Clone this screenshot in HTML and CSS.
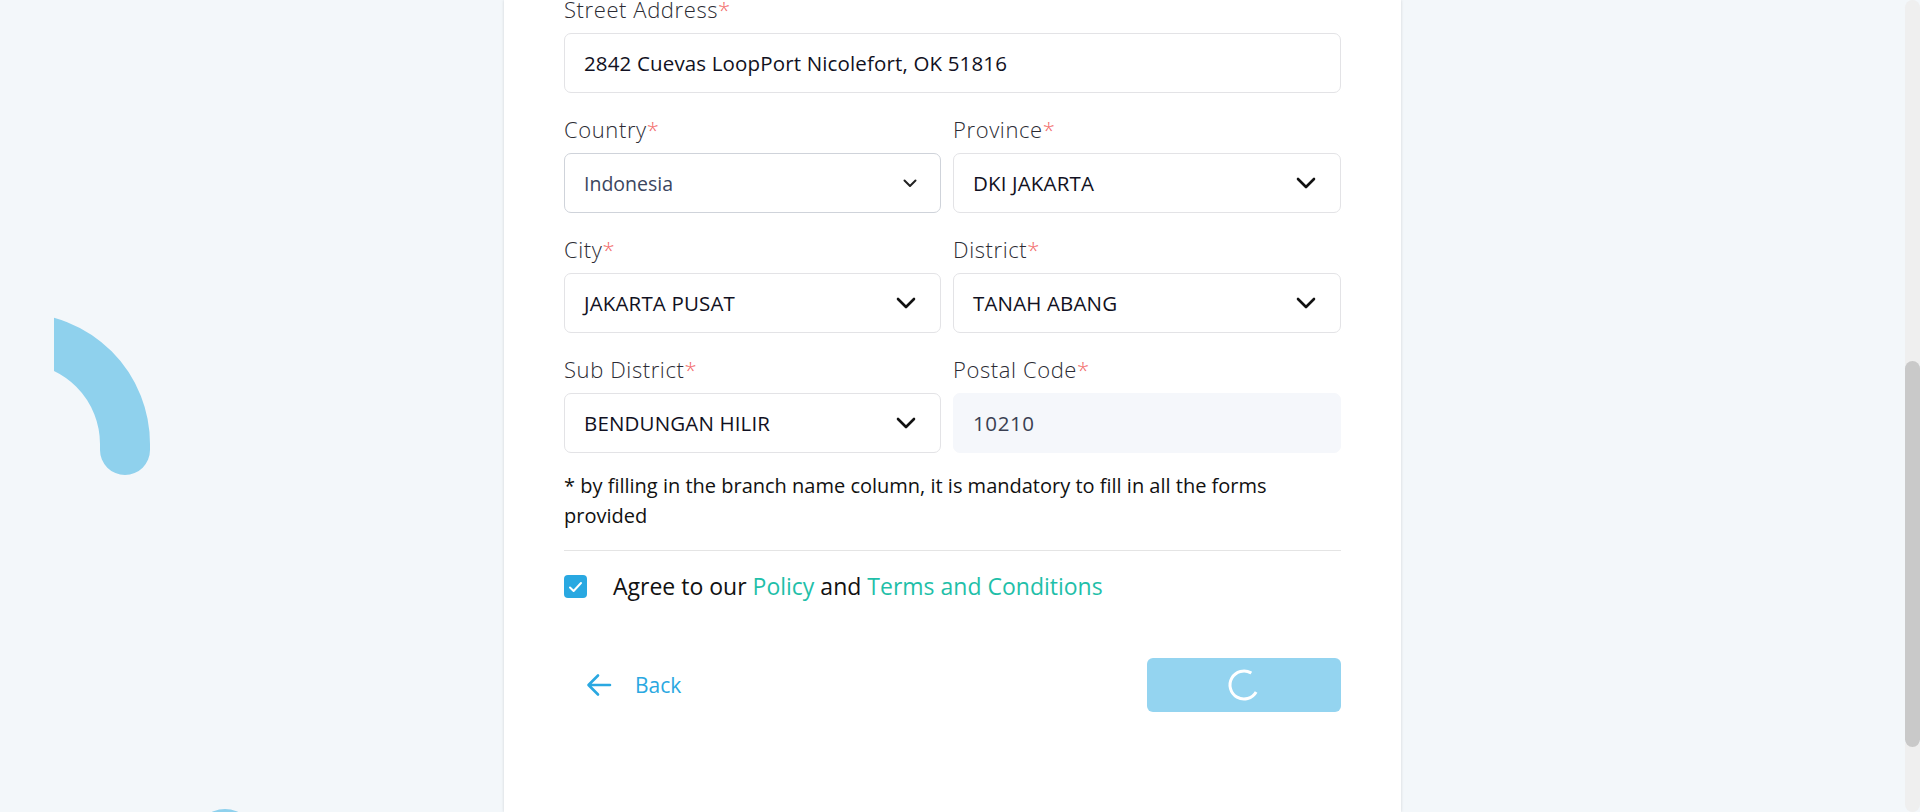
FILE: index.html
```html
<!DOCTYPE html>
<html lang="en">
<head>
<meta charset="utf-8">
<title>Branch Address</title>
<link rel="stylesheet" href="styles.css">
</head>
<body>
<div class="page">
  <main class="main">
    <svg class="deco-arc" width="120" height="190" viewBox="0 0 120 190" aria-hidden="true">
      <path d="M -35 38 A 106 106 0 0 1 71 144 L 71 150" fill="none" stroke="#8fd1ed" stroke-width="50" stroke-linecap="round"/>
    </svg>
    <div class="deco-dot"></div>

    <section class="card">
      <form class="form">
        <div class="grid">
          <div class="field span2">
            <label class="label">Street Address<span class="req">*</span></label>
            <div class="input">2842 Cuevas LoopPort Nicolefort, OK 51816</div>
          </div>

          <div class="field">
            <label class="label">Country<span class="req">*</span></label>
            <div class="input select native">
              <span>Indonesia</span>
              <svg class="chev-sm" width="14" height="9" viewBox="0 0 14 9"><polyline points="1.5,1.5 7,7 12.5,1.5" fill="none" stroke="#222" stroke-width="2" stroke-linecap="round" stroke-linejoin="round"/></svg>
            </div>
          </div>
          <div class="field">
            <label class="label">Province<span class="req">*</span></label>
            <div class="input select">
              <span>DKI JAKARTA</span>
              <svg class="chev" width="20" height="12" viewBox="0 0 20 12"><polyline points="2,2 10,10 18,2" fill="none" stroke="#111" stroke-width="2.6" stroke-linecap="round" stroke-linejoin="round"/></svg>
            </div>
          </div>

          <div class="field">
            <label class="label">City<span class="req">*</span></label>
            <div class="input select">
              <span>JAKARTA PUSAT</span>
              <svg class="chev" width="20" height="12" viewBox="0 0 20 12"><polyline points="2,2 10,10 18,2" fill="none" stroke="#111" stroke-width="2.6" stroke-linecap="round" stroke-linejoin="round"/></svg>
            </div>
          </div>
          <div class="field">
            <label class="label">District<span class="req">*</span></label>
            <div class="input select">
              <span>TANAH ABANG</span>
              <svg class="chev" width="20" height="12" viewBox="0 0 20 12"><polyline points="2,2 10,10 18,2" fill="none" stroke="#111" stroke-width="2.6" stroke-linecap="round" stroke-linejoin="round"/></svg>
            </div>
          </div>

          <div class="field">
            <label class="label">Sub District<span class="req">*</span></label>
            <div class="input select">
              <span>BENDUNGAN HILIR</span>
              <svg class="chev" width="20" height="12" viewBox="0 0 20 12"><polyline points="2,2 10,10 18,2" fill="none" stroke="#111" stroke-width="2.6" stroke-linecap="round" stroke-linejoin="round"/></svg>
            </div>
          </div>
          <div class="field">
            <label class="label">Postal Code<span class="req">*</span></label>
            <div class="input readonly">10210</div>
          </div>
        </div>

        <p class="note">* by filling in the branch name column, it is mandatory to fill in all the forms provided</p>

        <div class="agree">
          <span class="checkbox">
            <svg width="15" height="12" viewBox="0 0 15 12"><polyline points="2,6.5 5.6,10 13,2" fill="none" stroke="#fff" stroke-width="2" stroke-linecap="round" stroke-linejoin="round"/></svg>
          </span>
          <span class="agree-text">Agree to our <a class="link">Policy</a> and <a class="link">Terms and Conditions</a></span>
        </div>

        <div class="actions">
          <button type="button" class="back">
            <svg width="26" height="26" viewBox="0 0 26 26"><path d="M24 13 H3 M12 3.5 L2.5 13 L12 22.5" fill="none" stroke="#2aa8e1" stroke-width="2.6" stroke-linecap="round" stroke-linejoin="round"/></svg>
            <span>Back</span>
          </button>
          <button type="button" class="submit">
            <svg width="34" height="34" viewBox="0 0 34 34"><circle cx="17" cy="17" r="14" fill="none" stroke="#fff" stroke-width="3" stroke-dasharray="66 22" transform="rotate(30 17 17)"/></svg>
          </button>
        </div>
      </form>
    </section>
  </main>
  <div class="scrollbar">
    <div class="track-top"></div>
    <div class="thumb"></div>
    <div class="track-bottom"></div>
  </div>
</div>
</body>
</html>
```

FILE: styles.css
```css
* { box-sizing: border-box; }

html, body {
  margin: 0;
  padding: 0;
  height: 100%;
}

body {
  font-family: "Open Sans", "Liberation Sans", sans-serif;
  background: #f3f7fa;
  color: #111;
  overflow: hidden;
}

.page {
  display: flex;
  height: 812px;
}

.main {
  flex: 1;
  position: relative;
  overflow: hidden;
  display: flex;
  justify-content: center;
}

.deco-arc {
  position: absolute;
  left: 54px;
  top: 300px;
}

.deco-dot {
  position: absolute;
  left: 195px;
  top: 809px;
  width: 60px;
  height: 60px;
  border-radius: 50%;
  background: #8fd1ed;
}

.card {
  width: 897px;
  height: 100%;
  background: #fff;
  box-shadow: 0 0 3px rgba(0, 0, 0, 0.14);
  padding: 0 60px;
  position: relative;
}

.form {
  margin-top: -1px;
}

.grid {
  display: grid;
  grid-template-columns: 377px 388px;
  column-gap: 12px;
  row-gap: 26px;
}

.span2 { grid-column: 1 / 3; }

.field {
  display: flex;
  flex-direction: column;
}

.label {
  font-size: 22px;
  font-weight: 300;
  letter-spacing: 0.6px;
  line-height: 20px;
  color: #2b2b33;
  margin-bottom: 14px;
}

.req {
  color: #f26b6b;
}

.input {
  height: 60px;
  border: 1px solid #e3e3e6;
  border-radius: 7px;
  padding: 0 19px;
  display: flex;
  align-items: center;
  font-size: 20.5px;
  letter-spacing: 0.15px;
  color: #111122;
}

.select {
  justify-content: space-between;
  padding-right: 24px;
}

.native {
  border-color: #cfd3da;
  font-size: 19.5px;
  letter-spacing: 0;
  color: #3b4660;
  padding-right: 23px;
}

.readonly {
  background: #f5f7fb;
  border-color: #f5f7fb;
  color: #3a3f52;
  letter-spacing: 0.6px;
}

.note {
  margin: 18px 0 0;
  font-size: 20px;
  letter-spacing: 0;
  line-height: 30px;
  color: #111;
  padding-bottom: 19px;
  border-bottom: 1px solid #e4e4e4;
}

.agree {
  display: flex;
  align-items: center;
  margin-top: 24px;
  gap: 26px;
}

.checkbox {
  width: 23px;
  height: 23px;
  border-radius: 4px;
  background: #29a8e1;
  display: flex;
  align-items: center;
  justify-content: center;
}

.agree-text {
  font-size: 23px;
  line-height: 23px;
  color: #111;
}

.link {
  color: #1fbfa9;
  text-decoration: none;
}

.actions {
  display: flex;
  justify-content: space-between;
  align-items: center;
  margin-top: 60px;
}

.back {
  display: flex;
  align-items: center;
  gap: 23px;
  border: none;
  background: none;
  padding: 0 0 0 22px;
  font-family: inherit;
  font-size: 21px;
  color: #2aa8e1;
}

.submit {
  width: 194px;
  height: 54px;
  border: none;
  border-radius: 6px;
  background: #94d4f0;
  display: flex;
  align-items: center;
  justify-content: center;
  padding: 0;
}

.scrollbar {
  width: 15px;
  display: flex;
  flex-direction: column;
  background: #f3f7fa;
}

.track-top {
  height: 365px;
  background: #efefef;
  border-radius: 8px 8px 0 0;
}

.thumb {
  height: 386px;
  background: #c9c9c9;
  border-radius: 8px;
  margin: -4px 0;
  position: relative;
}

.track-bottom {
  flex: 1;
  background: #efefef;
  border-radius: 0 0 8px 8px;
}
```
